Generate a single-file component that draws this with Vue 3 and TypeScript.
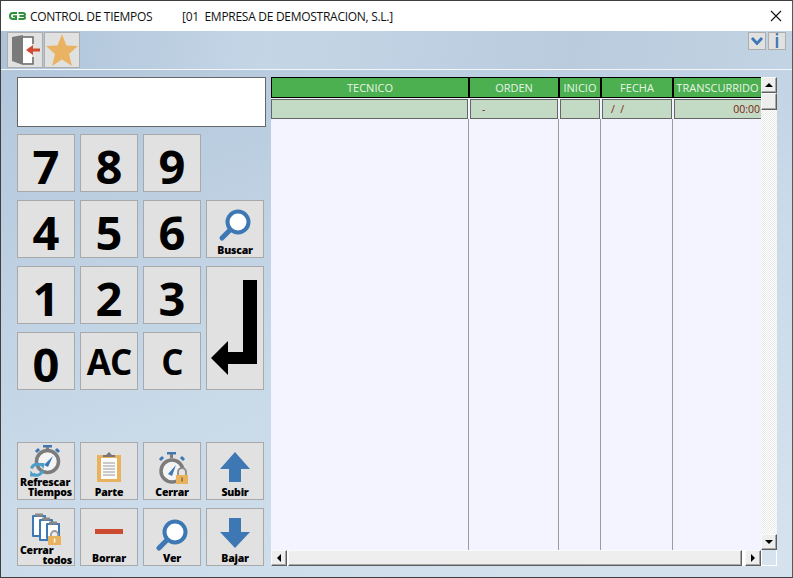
<script setup lang="ts">
const digits1 = ['7', '8', '9']
const digits2 = ['4', '5', '6']
const digits3 = ['1', '2', '3']
const columns = [
  { key: 'tec', label: 'TECNICO', width: 199 },
  { key: 'ord', label: 'ORDEN', width: 90 },
  { key: 'ini', label: 'INICIO', width: 42 },
  { key: 'fec', label: 'FECHA', width: 72 },
  { key: 'tra', label: 'TRANSCURRIDO', width: 87 },
]
</script>

<template>
  <div class="window">
    <header class="titlebar">
      <svg class="logo" width="17" height="10" viewBox="0 0 17 10">
        <path d="M8 2 H4 Q1 2 1 5 Q1 8 4 8 H7 V5.300 H4" fill="none" stroke="#2f8f3c" stroke-width="2" />
        <path d="M9.500 2 H14 Q16 2 16 3.500 Q16 5 14 5 H10.500 M14 5 Q16 5 16 6.500 Q16 8 14 8 H9.500" fill="none" stroke="#2f8f3c" stroke-width="2" />
      </svg>
      <span class="app-name">CONTROL DE TIEMPOS</span>
      <span class="company">[01&nbsp; EMPRESA DE DEMOSTRACION, S.L.]</span>
      <svg class="close" width="12" height="12" viewBox="0 0 12 12">
        <path d="M1 1 L11 11 M11 1 L1 11" stroke="#111" stroke-width="1.100" fill="none" />
      </svg>
    </header>

    <div class="content">
      <div class="toolbar">
        <button class="tool">
          <svg width="34" height="34" viewBox="1 1 34 34">
            <path d="M16 5 H26 V12 M26 25 V32 H16" fill="none" stroke="#6a6a6a" stroke-width="1.500" />
            <rect x="16" y="6" width="9" height="25" fill="#fff" />
            <path d="M5 5 L16 3 V33 L5 29 Z" fill="#7a7a7a" />
            <path d="M33 18 H21" fill="none" stroke="#cf4a31" stroke-width="3" />
            <path d="M19 18 L26 13 V23 Z" fill="#cf4a31" />
          </svg>
        </button>
        <button class="tool">
          <svg width="34" height="34" viewBox="0 0 34 34">
            <path d="M17 1 L21.500 12.500 L33 13 L24 21 L27 33 L17 26.500 L7 33 L10 21 L1 13 L12.500 12.500 Z" fill="#eab364" />
          </svg>
        </button>
        <div class="spacer"></div>
        <button class="mini">
          <svg width="16" height="16" viewBox="0 0 16 16">
            <path d="M3 5 L8 10.500 L13 5" fill="none" stroke="#3d78b5" stroke-width="2.800" />
          </svg>
        </button>
        <button class="mini info">i</button>
      </div>

      <main class="main">
        <section class="left">
          <div class="display"></div>

          <div class="keypad">
            <button v-for="d in digits1" :key="d" class="key digit">{{ d }}</button>
            <div></div>
            <button v-for="d in digits2" :key="d" class="key digit">{{ d }}</button>
            <button class="key action">
              <svg width="56" height="42" viewBox="1 1 56 42">
                <circle cx="32" cy="22" r="10.500" fill="#fff" stroke="#3d78b5" stroke-width="4" />
                <path d="M24 30 L16 38" stroke="#3d78b5" stroke-width="5" stroke-linecap="round" />
              </svg>
              <span class="label">Buscar</span>
            </button>
            <button v-for="d in digits3" :key="d" class="key digit">{{ d }}</button>
            <button class="key enter">
              <svg width="56" height="122" viewBox="1 1 56 122">
                <path d="M37 14 H51 V98 H22 V109 L5 92 L22 75 V86 H37 Z" fill="#000" />
              </svg>
            </button>
            <button class="key digit">0</button>
            <button class="key letter">AC</button>
            <button class="key letter">C</button>
          </div>

          <div class="actions">
            <button class="key action">
              <svg width="56" height="34" viewBox="1 1 56 34">
                <rect x="26" y="3" width="9" height="2.500" fill="#3d78b5" />
                <rect x="29" y="5" width="3" height="3" fill="#7c7c7c" />
                <path d="M19 10 L22 7 M42 10 L39 7" stroke="#3d78b5" stroke-width="3" />
                <circle cx="30.500" cy="19.500" r="11" fill="#f4f4f4" stroke="#7c7c7c" stroke-width="3.500" />
                <path d="M27 23 L36 14 L31 25 Z" fill="#3d78b5" />
                <path d="M14.500 26.500 A6 6 0 0 1 24 23.500" fill="none" stroke="#4a9fc8" stroke-width="3" />
                <path d="M21.500 21 L27.500 21 L26.500 27 Z" fill="#4a9fc8" />
                <path d="M25.500 28.500 A6 6 0 0 1 16 32" fill="none" stroke="#4a9fc8" stroke-width="3" />
                <path d="M18.500 34.500 L13 34.500 L13.500 28.500 Z" fill="#4a9fc8" />
              </svg>
              <span class="label two"><span>Refrescar</span><span class="end">Tiempos</span></span>
            </button>
            <button class="key action">
              <svg width="56" height="42" viewBox="1 1 56 42">
                <rect x="17" y="13" width="24" height="27" fill="#e8b25e" />
                <rect x="21" y="16" width="16" height="21" fill="#fbfbfb" />
                <path d="M23 21 H35 M23 24 H35 M23 27 H35 M23 30 H35 M23 33 H35" stroke="#9a9a9a" stroke-width="1" />
                <path d="M23 15 V13 H26 L29 10 L32 13 H35 V15 Z" fill="#777" />
              </svg>
              <span class="label">Parte</span>
            </button>
            <button class="key action">
              <svg width="56" height="42" viewBox="1 1 56 42">
                <rect x="24" y="10" width="9" height="2.500" fill="#3d78b5" />
                <rect x="27" y="12" width="3" height="4" fill="#7c7c7c" />
                <path d="M17 18 L20 15 M41 18 L38 15" stroke="#3d78b5" stroke-width="3" />
                <circle cx="29" cy="29" r="11" fill="#f4f4f4" stroke="#7c7c7c" stroke-width="3.500" />
                <path d="M25 32 L33 23 L29 34 Z" fill="#3d78b5" />
                <path d="M35 34 V30 A4 4 0 0 1 43 30 V34" fill="#e4e4e4" stroke="#8a8a8a" stroke-width="1.800" />
                <rect x="33" y="33" width="12" height="9" fill="#e8b25e" />
                <rect x="38.300" y="35.500" width="1.500" height="4" fill="#8a6a30" />
              </svg>
              <span class="label">Cerrar</span>
            </button>
            <button class="key action">
              <svg width="56" height="42" viewBox="1 1 56 42">
                <path d="M29 10 L44 27 H35 V40 H23 V27 H14 Z" fill="#3d78b5" />
              </svg>
              <span class="label">Subir</span>
            </button>

            <button class="key action">
              <svg width="56" height="36" viewBox="1 1 56 36">
                <rect x="15" y="7" width="14" height="22" rx="1" fill="#3d78b5" />
                <rect x="17" y="9" width="10" height="18" fill="#fff" />
                <rect x="18" y="5.500" width="8" height="3" fill="#888" />
                <rect x="22" y="11" width="14" height="22" rx="1" fill="#3d78b5" />
                <rect x="24" y="13" width="10" height="18" fill="#fff" />
                <rect x="25" y="9.500" width="8" height="3" fill="#888" />
                <rect x="29" y="15" width="14" height="16" rx="1" fill="#3d78b5" />
                <rect x="31" y="17" width="10" height="12" fill="#fff" />
                <rect x="32" y="13.500" width="8" height="3" fill="#888" />
                <path d="M34 29 V26.500 A3.500 3.500 0 0 1 41 26.500 V29" fill="#eee" stroke="#999" stroke-width="1.800" />
                <rect x="31" y="28" width="13" height="9" fill="#e8b25e" />
                <rect x="36.800" y="30.500" width="1.500" height="4" fill="#fff" />
              </svg>
              <span class="label two"><span>Cerrar</span><span class="end">todos</span></span>
            </button>
            <button class="key action">
              <svg width="56" height="42" viewBox="1 1 56 42">
                <rect x="15" y="21" width="28" height="5" fill="#cc4a30" />
              </svg>
              <span class="label">Borrar</span>
            </button>
            <button class="key action">
              <svg width="56" height="42" viewBox="1 1 56 42">
                <circle cx="32" cy="24" r="10.500" fill="#fff" stroke="#3d78b5" stroke-width="4" />
                <path d="M24 32 L16 40" stroke="#3d78b5" stroke-width="5" stroke-linecap="round" />
              </svg>
              <span class="label">Ver</span>
            </button>
            <button class="key action">
              <svg width="56" height="42" viewBox="1 1 56 42">
                <path d="M23 10 H35 V24 H44 L29 40 L14 24 H23 Z" fill="#3d78b5" />
              </svg>
              <span class="label">Bajar</span>
            </button>
          </div>
        </section>

        <section class="table-area">
          <div class="table-top">
            <div class="table">
              <div class="head">
                <div v-for="c in columns" :key="c.key" class="hcell" :style="{ width: c.width + 'px' }">{{ c.label }}</div>
              </div>
              <div class="row">
                <div class="rcell" style="width: 197px"></div>
                <div class="rcell" style="width: 88px"><span class="red pad-ord">-</span></div>
                <div class="rcell" style="width: 40px"></div>
                <div class="rcell" style="width: 70px"><span class="red pad-fec">/ &nbsp;/</span></div>
                <div class="rcell right" style="width: 87px"><span class="red">00:00</span></div>
              </div>
              <div class="body">
                <div v-for="c in columns" :key="c.key" class="bcol" :style="{ width: c.width + 'px' }"></div>
              </div>
            </div>
            <div class="vscroll">
              <div class="sbtn"><i class="tri up"></i></div>
              <div class="sbtn thumb"></div>
              <div class="track"></div>
              <div class="sbtn"><i class="tri down"></i></div>
            </div>
          </div>
          <div class="table-bottom">
            <div class="hscroll">
              <div class="sbtn"><i class="tri left-t"></i></div>
              <div class="hthumb"></div>
              <div class="sbtn"><i class="tri right-t"></i></div>
            </div>
            <div class="corner"></div>
          </div>
        </section>
      </main>
    </div>
  </div>
</template>

<style>
html, body { margin: 0; padding: 0; background: #fff; overflow: hidden; }
</style>

<style scoped>
.window {
  width: 793px;
  height: 578px;
  box-sizing: border-box;
  border: 1px solid #3f3f3f;
  border-right-color: #55595c;
  display: flex;
  flex-direction: column;
  overflow: hidden;
  font-family: "Open Sans", "Liberation Sans", sans-serif;
  color: #000;
}
.titlebar {
  height: 30px;
  flex: none;
  background: #fff;
  display: flex;
  align-items: center;
  padding-left: 8px;
  font-size: 12px;
  color: #111;
}
.logo { flex: none; margin-right: 4px; }
.app-name { width: 152px; flex: none; letter-spacing: -0.3px; }
.company { letter-spacing: -0.28px; }
.close { margin-left: auto; margin-right: 10px; }
.content {
  flex: 1;
  display: flex;
  flex-direction: column;
  min-height: 0;
  background: linear-gradient(100deg, #aec3da 0%, #c4d6e6 30%, #b9cbdd 65%, #c6d7e6 100%);
}
.toolbar {
  height: 39px;
  flex: none;
  box-sizing: border-box;
  border-bottom: 1px solid #f2f6fa;
  display: flex;
  align-items: flex-start;
  padding: 1px 6px 0 6px;
  gap: 1px;
}
.spacer { flex: 1; }
.tool {
  width: 36px;
  height: 36px;
  padding: 0;
  box-sizing: border-box;
  background: #e1e1e1;
  border: 1px solid #adadad;
  display: flex;
  align-items: center;
  justify-content: center;
}
.mini {
  width: 18px;
  height: 18px;
  padding: 0;
  margin-left: 1px;
  box-sizing: border-box;
  background: #e1e1e1;
  border: 1px solid #adadad;
  display: flex;
  align-items: center;
  justify-content: center;
}
.info {
  color: #3d78b5;
  font-family: "Open Sans", sans-serif;
  font-weight: 600;
  font-size: 19px;
  line-height: 16px;
}
.main {
  flex: 1;
  min-height: 0;
  display: flex;
  background: linear-gradient(160deg, #b3c7dc 0%, #c8d9e8 50%, #d6e3ee 100%);
}
.left {
  width: 270px;
  flex: none;
  box-sizing: border-box;
  padding: 7px 0 0 16px;
}
.display {
  width: 249px;
  height: 50px;
  box-sizing: border-box;
  background: #fff;
  border: 1px solid #666;
}
.keypad {
  margin-top: 7px;
  display: grid;
  grid-template-columns: repeat(4, 58px);
  grid-auto-rows: 58px;
  column-gap: 5px;
  row-gap: 8px;
}
.actions {
  margin-top: 52px;
  display: grid;
  grid-template-columns: repeat(4, 58px);
  grid-auto-rows: 58px;
  column-gap: 5px;
  row-gap: 8px;
}
.key {
  box-sizing: border-box;
  padding: 0;
  background: #e1e1e1;
  border: 1px solid #a9a9a9;
  font-family: "Open Sans", "Liberation Sans", sans-serif;
  color: #000;
  min-width: 0;
}
.digit { font-size: 47px; font-weight: 700; line-height: 46px; padding-top: 6px; }
.letter { font-size: 35px; font-weight: 700; line-height: 46px; padding-top: 2px; letter-spacing: -1px; }
.enter { grid-row: span 2; display: block; }
.enter svg { display: block; }
.action {
  display: flex;
  flex-direction: column;
  align-items: center;
  justify-content: space-between;
}
.action svg { display: block; flex: none; }
.label {
  font-size: 10.5px;
  font-weight: 800;
  line-height: 14px;
  height: 14px;
  flex: none;
  letter-spacing: -0.2px;
}
.two {
  height: auto;
  width: 100%;
  box-sizing: border-box;
  padding: 0 2px 3px 2px;
  display: flex;
  flex-direction: column;
  line-height: 10px;
  text-align: left;
}
.end { text-align: right; }
.table-area {
  width: 506px;
  flex: none;
  margin-top: 7px;
  display: flex;
  flex-direction: column;
  height: 489px;
}
.table-top { flex: 1; min-height: 0; display: flex; }
.table {
  width: 490px;
  flex: none;
  background: #f3f4ff;
  display: flex;
  flex-direction: column;
  overflow: hidden;
}
.head { display: flex; height: 22px; flex: none; }
.hcell {
  flex: none;
  box-sizing: border-box;
  border-top: 1px solid #000;
  border-bottom: 1px solid #000;
  border-right: 2px solid #000;
  background: #4caf50;
  color: #e9f5e9;
  font-size: 11px;
  line-height: 19px;
  text-align: center;
  height: 21px;
  white-space: nowrap;
  overflow: hidden;
}
.hcell:first-child { border-left: 1px solid #000; }
.hcell:last-child { border-right: none; }
.row { display: flex; height: 20px; flex: none; column-gap: 2px; }
.rcell {
  flex: none;
  box-sizing: border-box;
  background: #c3dbc4;
  border: 1px solid #666;
  font-size: 10.5px;
  line-height: 19px;
  white-space: nowrap;
}
.red { color: #7e1c12; }
.pad-ord { padding-left: 11px; }
.pad-fec { padding-left: 8px; }
.right { text-align: right; border-right: none; padding-right: 1px; }
.body { flex: 1; display: flex; min-height: 0; margin-left: -1px; }
.bcol { flex: none; box-sizing: border-box; border-right: 1px solid #9c9c9c; }
.bcol:last-child { border-right: none; }
.vscroll {
  width: 16px;
  flex: none;
  display: flex;
  flex-direction: column;
}
.sbtn {
  width: 16px;
  height: 16px;
  flex: none;
  box-sizing: border-box;
  background: #eeeeee;
  border-top: 1px solid #fafafa;
  border-left: 1px solid #fafafa;
  border-right: 1px solid #5e5e5e;
  border-bottom: 1px solid #5e5e5e;
  box-shadow: inset -1px -1px 0 #a8a8a8;
  display: flex;
  align-items: center;
  justify-content: center;
}
.thumb { height: 17px; }
.track {
  flex: 1;
  background-color: #fff;
  background-image: conic-gradient(#eaeaea 25%, #fff 0 50%, #eaeaea 0 75%, #fff 0);
  background-size: 2px 2px;
}
.tri { display: block; width: 0; height: 0; border-style: solid; border-color: transparent; }
.up { border-width: 0 4px 4px 4px; border-bottom-color: #000; }
.down { border-width: 4px 4px 0 4px; border-top-color: #000; }
.left-t { border-width: 4px 4px 4px 0; border-right-color: #000; }
.right-t { border-width: 4px 0 4px 4px; border-left-color: #000; }
.table-bottom { height: 16px; flex: none; display: flex; }
.hscroll { width: 490px; flex: none; display: flex; background: #fff; }
.hthumb {
  flex: 1;
  box-sizing: border-box;
  background: #eeeeee;
  border-top: 1px solid #fafafa;
  border-left: 1px solid #fafafa;
  border-right: 1px solid #5e5e5e;
  border-bottom: 1px solid #5e5e5e;
  box-shadow: inset -1px -1px 0 #a8a8a8;
  margin: 0 3px 0 1px;
}
.corner {
  width: 16px;
  flex: none;
  box-sizing: border-box;
  border: 1px solid #fff;
  border-top: none;
  background: #d7e4ef;
}
</style>
